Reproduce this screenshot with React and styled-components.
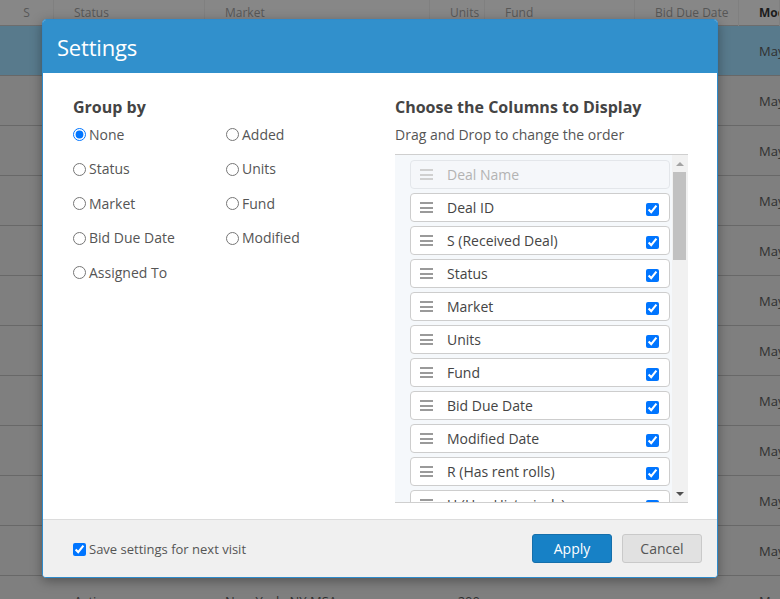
import React from "react";
import styled, { createGlobalStyle } from "styled-components";

const GlobalStyle = createGlobalStyle`
  * { box-sizing: border-box; }
  body {
    margin: 0;
    font-family: "Open Sans", "Noto Sans", sans-serif;
  }
`;

const Page = styled.div`
  position: relative;
  width: 780px;
  height: 599px;
  overflow: hidden;
  background: #7f7f7f;
`;

const gridCols = "54px 151px 225px 55px 150px 104px 1fr";

const TableHead = styled.div`
  display: grid;
  grid-template-columns: ${gridCols};
  height: 26px;
  align-items: center;
  background: #878787;
  border-bottom: 1px solid #6d6d6d;
  font-size: 12px;
  color: #575757;
`;

const HeadCell = styled.div`
  padding-left: ${(p) => (p.$center ? 0 : 20)}px;
  text-align: ${(p) => (p.$center ? "center" : p.$right ? "right" : "left")};
  padding-right: ${(p) => (p.$right ? 5 : 0)}px;
  font-weight: ${(p) => (p.$bold ? 700 : 400)};
  color: ${(p) => (p.$bold ? "#1c1c1c" : "inherit")};
  white-space: nowrap;
  overflow: hidden;
  border-right: 1px solid #808080;
  line-height: 26px;
`;

const Row = styled.div`
  display: grid;
  grid-template-columns: ${gridCols};
  height: 50px;
  align-items: center;
  background: ${(p) => (p.$active ? "#587a8c" : "#7f7f7f")};
  border-bottom: 1px solid #686868;
  font-size: 13px;
  color: #303030;
`;

const Cell = styled.div`
  padding-left: ${(p) => (p.$center ? 0 : 20)}px;
  padding-right: ${(p) => (p.$right ? 5 : 0)}px;
  text-align: ${(p) => (p.$center ? "center" : p.$right ? "right" : "left")};
  white-space: nowrap;
  overflow: hidden;
`;

const Modal = styled.div`
  position: absolute;
  left: 42px;
  top: 19px;
  width: 676px;
  height: 559px;
  display: flex;
  flex-direction: column;
  border: 1px solid #2f8bcb;
  border-radius: 4px;
  overflow: hidden;
  background: #fff;
  box-shadow: 0 3px 12px rgba(0, 0, 0, 0.35);
`;

const ModalHeader = styled.div`
  height: 53px;
  flex: none;
  display: flex;
  align-items: center;
  padding-left: 14px;
  background: #3190cc;
  color: #fff;
  font-size: 22px;
  letter-spacing: -0.2px;
`;

const ModalBody = styled.div`
  height: 446px;
  flex: none;
  display: flex;
  padding: 23px 29px 0 30px;
`;

const LeftCol = styled.div`
  width: 322px;
  flex: none;
`;

const RightCol = styled.div`
  flex: 1;
  display: flex;
  flex-direction: column;
`;

const Title = styled.div`
  font-size: 16px;
  font-weight: 700;
  color: #444;
  line-height: 22px;
`;

const Hint = styled.div`
  font-size: 14px;
  color: #555;
  line-height: 20px;
  margin-top: 7px;
`;

const RadioGrid = styled.div`
  display: grid;
  grid-template-columns: 153px 153px;
  row-gap: 14.5px;
  margin-top: 6px;
`;

const RadioLabel = styled.label`
  display: flex;
  align-items: center;
  height: 20px;
  font-size: 14px;
  color: #555;
  input {
    width: 13px;
    height: 13px;
    margin: 1px 3px 0 0;
  }
`;

const ListBox = styled.div`
  margin-top: 9px;
  height: 349px;
  display: flex;
  background: #f5f8fb;
  border-top: 1px solid #cfcfcf;
  border-bottom: 1px solid #cfcfcf;
`;

const ListItems = styled.div`
  flex: 1;
  overflow: hidden;
  display: flex;
  flex-direction: column;
  gap: 4px;
  padding: 5px 2px 0 15px;
`;

const Item = styled.div`
  flex: none;
  height: 29px;
  display: flex;
  align-items: center;
  padding: 0 10px 0 9px;
  border: 1px solid ${(p) => (p.$disabled ? "#e3e6ea" : "#cdcdcd")};
  border-radius: 4px;
  background: ${(p) => (p.$disabled ? "#f5f7fa" : "#fff")};
  color: ${(p) => (p.$disabled ? "#b3b3b3" : "#444")};
  font-size: 14px;
  input {
    width: 13px;
    height: 13px;
    margin: 4px 0 0 auto;
  }
`;

const Grip = styled.span`
  display: flex;
  flex-direction: column;
  gap: 2.5px;
  width: 13px;
  margin-right: 14px;
  span {
    height: 2px;
    background: ${(p) => (p.$disabled ? "#d0d0d0" : "#9a9a9a")};
  }
`;

const ScrollTrack = styled.div`
  width: 16px;
  flex: none;
  background: #f1f1f1;
  display: flex;
  flex-direction: column;
  align-items: center;
  padding: 0 2px 0 1px;
`;

const Arrow = styled.div`
  height: 17px;
  flex: none;
  display: flex;
  align-items: center;
  justify-content: center;
  &::after {
    content: "";
    border-left: 4px solid transparent;
    border-right: 4px solid transparent;
    ${(p) => (p.$down ? "border-top: 4px solid #505050;" : "border-bottom: 4px solid #a3a3a3;")}
  }
`;

const ScrollSpace = styled.div`
  flex: 1;
  width: 100%;
`;

const Thumb = styled.div`
  width: 100%;
  height: 88px;
  background: #c1c1c1;
`;

const ModalFooter = styled.div`
  flex: 1;
  display: flex;
  align-items: center;
  padding: 0 15px 0 30px;
  background: #f0f0f0;
  border-top: 1px solid #dcdcdc;
`;

const SaveLabel = styled.label`
  display: flex;
  align-items: center;
  font-size: 13px;
  color: #555;
  input {
    width: 13px;
    height: 13px;
    margin: 2px 3px 0 0;
  }
`;

const Buttons = styled.div`
  margin-left: auto;
  display: flex;
  gap: 10px;
`;

const Button = styled.button`
  width: 80px;
  height: 29px;
  border-radius: 3px;
  font-family: inherit;
  font-size: 14px;
  border: 1px solid ${(p) => (p.$primary ? "#156fab" : "#c9c9c9")};
  background: ${(p) => (p.$primary ? "#1781c6" : "#e1e1e1")};
  color: ${(p) => (p.$primary ? "#fff" : "#555")};
`;

const headers = [
  { t: "S", center: true },
  { t: "Status" },
  { t: "Market" },
  { t: "Units", right: true },
  { t: "Fund" },
  { t: "Bid Due Date" },
  { t: "Modified", bold: true },
];

const rows = Array.from({ length: 12 }, (_, i) => [
  "",
  i === 10 ? "New" : "Active",
  "New York, NY MSA",
  "200",
  "",
  "",
  "May 21, 2024",
]);

const groupOptions = [
  ["None", "Added"],
  ["Status", "Units"],
  ["Market", "Fund"],
  ["Bid Due Date", "Modified"],
  ["Assigned To", null],
];

const columns = [
  "Deal ID",
  "S (Received Deal)",
  "Status",
  "Market",
  "Units",
  "Fund",
  "Bid Due Date",
  "Modified Date",
  "R (Has rent rolls)",
  "U (Has Historicals)",
  "Assigned To",
];

const GripIcon = ({ disabled }) => (
  <Grip $disabled={disabled}>
    <span />
    <span />
    <span />
  </Grip>
);

export default function App() {
  return (
    <Page>
      <GlobalStyle />
      <TableHead>
        {headers.map((h) => (
          <HeadCell key={h.t} $center={h.center} $right={h.right} $bold={h.bold}>
            {h.t}
          </HeadCell>
        ))}
      </TableHead>
      {rows.map((r, i) => (
        <Row key={i} $active={i === 0}>
          {r.map((c, j) => (
            <Cell key={j} $center={j === 0} $right={j === 3}>
              {c}
            </Cell>
          ))}
        </Row>
      ))}

      <Modal>
        <ModalHeader>Settings</ModalHeader>
        <ModalBody>
          <LeftCol>
            <Title>Group by</Title>
            <RadioGrid>
              {groupOptions.flat().map((opt, i) =>
                opt ? (
                  <RadioLabel key={opt}>
                    <input type="radio" name="group" defaultChecked={i === 0} />
                    {opt}
                  </RadioLabel>
                ) : (
                  <span key={i} />
                )
              )}
            </RadioGrid>
          </LeftCol>
          <RightCol>
            <Title>Choose the Columns to Display</Title>
            <Hint>Drag and Drop to change the order</Hint>
            <ListBox>
              <ListItems>
                <Item $disabled>
                  <GripIcon disabled />
                  Deal Name
                </Item>
                {columns.map((c) => (
                  <Item key={c}>
                    <GripIcon />
                    {c}
                    <input type="checkbox" defaultChecked />
                  </Item>
                ))}
              </ListItems>
              <ScrollTrack>
                <Arrow />
                <Thumb />
                <ScrollSpace />
                <Arrow $down />
              </ScrollTrack>
            </ListBox>
          </RightCol>
        </ModalBody>
        <ModalFooter>
          <SaveLabel>
            <input type="checkbox" defaultChecked />
            Save settings for next visit
          </SaveLabel>
          <Buttons>
            <Button $primary>Apply</Button>
            <Button>Cancel</Button>
          </Buttons>
        </ModalFooter>
      </Modal>
    </Page>
  );
}
